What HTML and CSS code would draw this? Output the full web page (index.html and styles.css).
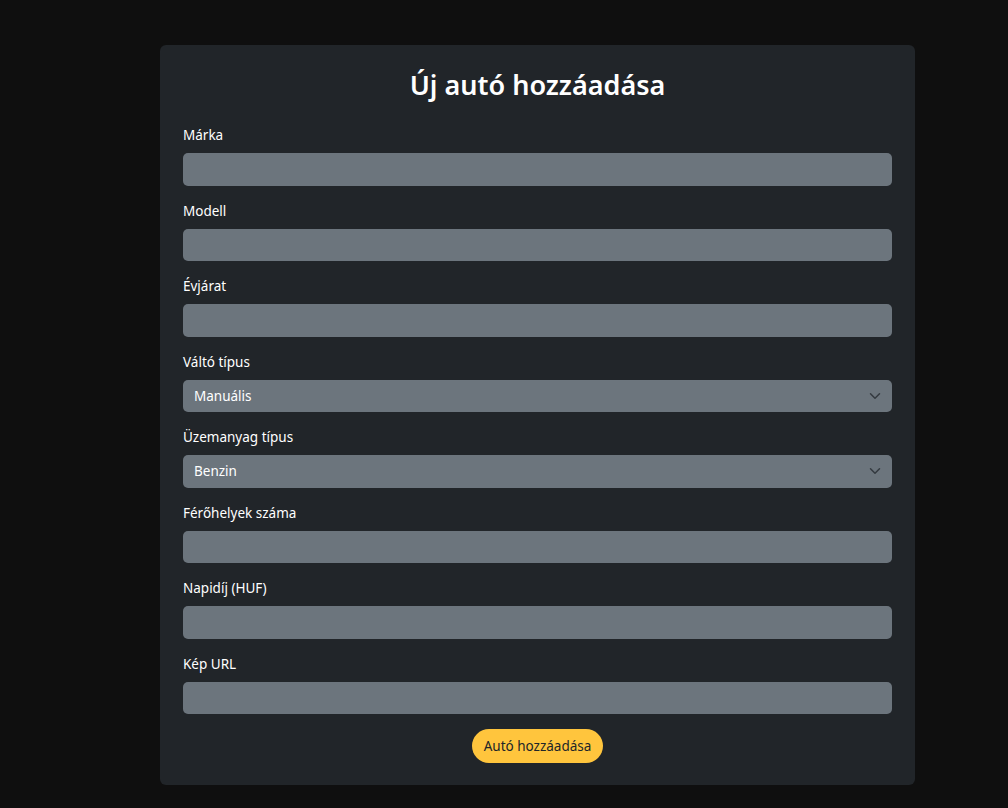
FILE: index.html
```html
<!DOCTYPE html>
<html lang="hu">
<head>
<meta charset="utf-8">
<title>Új autó hozzáadása</title>
<link rel="stylesheet" href="styles.css">
</head>
<body>
<main class="page">
  <form class="card">
    <h2 class="title">Új autó hozzáadása</h2>
    <div class="field"><label class="label">Márka</label><input class="input" type="text"></div>
    <div class="field"><label class="label">Modell</label><input class="input" type="text"></div>
    <div class="field"><label class="label">Évjárat</label><input class="input" type="number"></div>
    <div class="field"><label class="label">Váltó típus</label>
      <div class="select"><span>Manuális</span>
        <svg class="chev" width="12" height="12" viewBox="0 0 16 16"><path d="M2 5l6 6 6-6" fill="none" stroke="#343a40" stroke-width="2" stroke-linecap="round" stroke-linejoin="round"/></svg>
      </div>
    </div>
    <div class="field"><label class="label">Üzemanyag típus</label>
      <div class="select"><span>Benzin</span>
        <svg class="chev" width="12" height="12" viewBox="0 0 16 16"><path d="M2 5l6 6 6-6" fill="none" stroke="#343a40" stroke-width="2" stroke-linecap="round" stroke-linejoin="round"/></svg>
      </div>
    </div>
    <div class="field"><label class="label">Férőhelyek száma</label><input class="input" type="number"></div>
    <div class="field"><label class="label">Napidíj (HUF)</label><input class="input" type="number"></div>
    <div class="field"><label class="label">Kép URL</label><input class="input" type="text"></div>
    <div class="actions"><button class="btn" type="button">Autó hozzáadása</button></div>
  </form>
</main>
</body>
</html>
```
FILE: styles.css
```css
* { box-sizing: border-box; }
html, body { margin: 0; padding: 0; }
body {
  background: #0f0f0f;
  font-family: "Noto Sans", "Open Sans", sans-serif;
  color: #fff;
  height: 808px;
  overflow: hidden;
}
.page {
  display: flex;
  justify-content: flex-start;
  padding: 45px 0 0 160px;
}
.card {
  width: 755px;
  background: #212529;
  border-radius: 6px;
  padding: 23px 23px 22px;
  display: flex;
  flex-direction: column;
}
.title {
  margin: 0 0 23px;
  text-align: center;
  font-size: 27px;
  line-height: 34px;
  font-weight: 600;
}
.field {
  display: flex;
  flex-direction: column;
  margin-bottom: 15px;
}
.label {
  font-size: 13.5px;
  line-height: 21px;
  margin-bottom: 7px;
}
.input, .select {
  height: 32.5px;
  border: none;
  border-radius: 5px;
  background: #6c757d;
  color: #fff;
  font: inherit;
  font-size: 13.5px;
  padding: 0 11px;
  outline: none;
}
.select {
  display: flex;
  align-items: center;
  justify-content: space-between;
}
.chev { margin-right: 0; }
.actions {
  display: flex;
  justify-content: center;
}
.btn {
  height: 34px;
  padding: 0 12px;
  border: none;
  border-radius: 17px;
  background: #ffc53d;
  color: #212529;
  font: inherit;
  font-size: 13.5px;
}
```
